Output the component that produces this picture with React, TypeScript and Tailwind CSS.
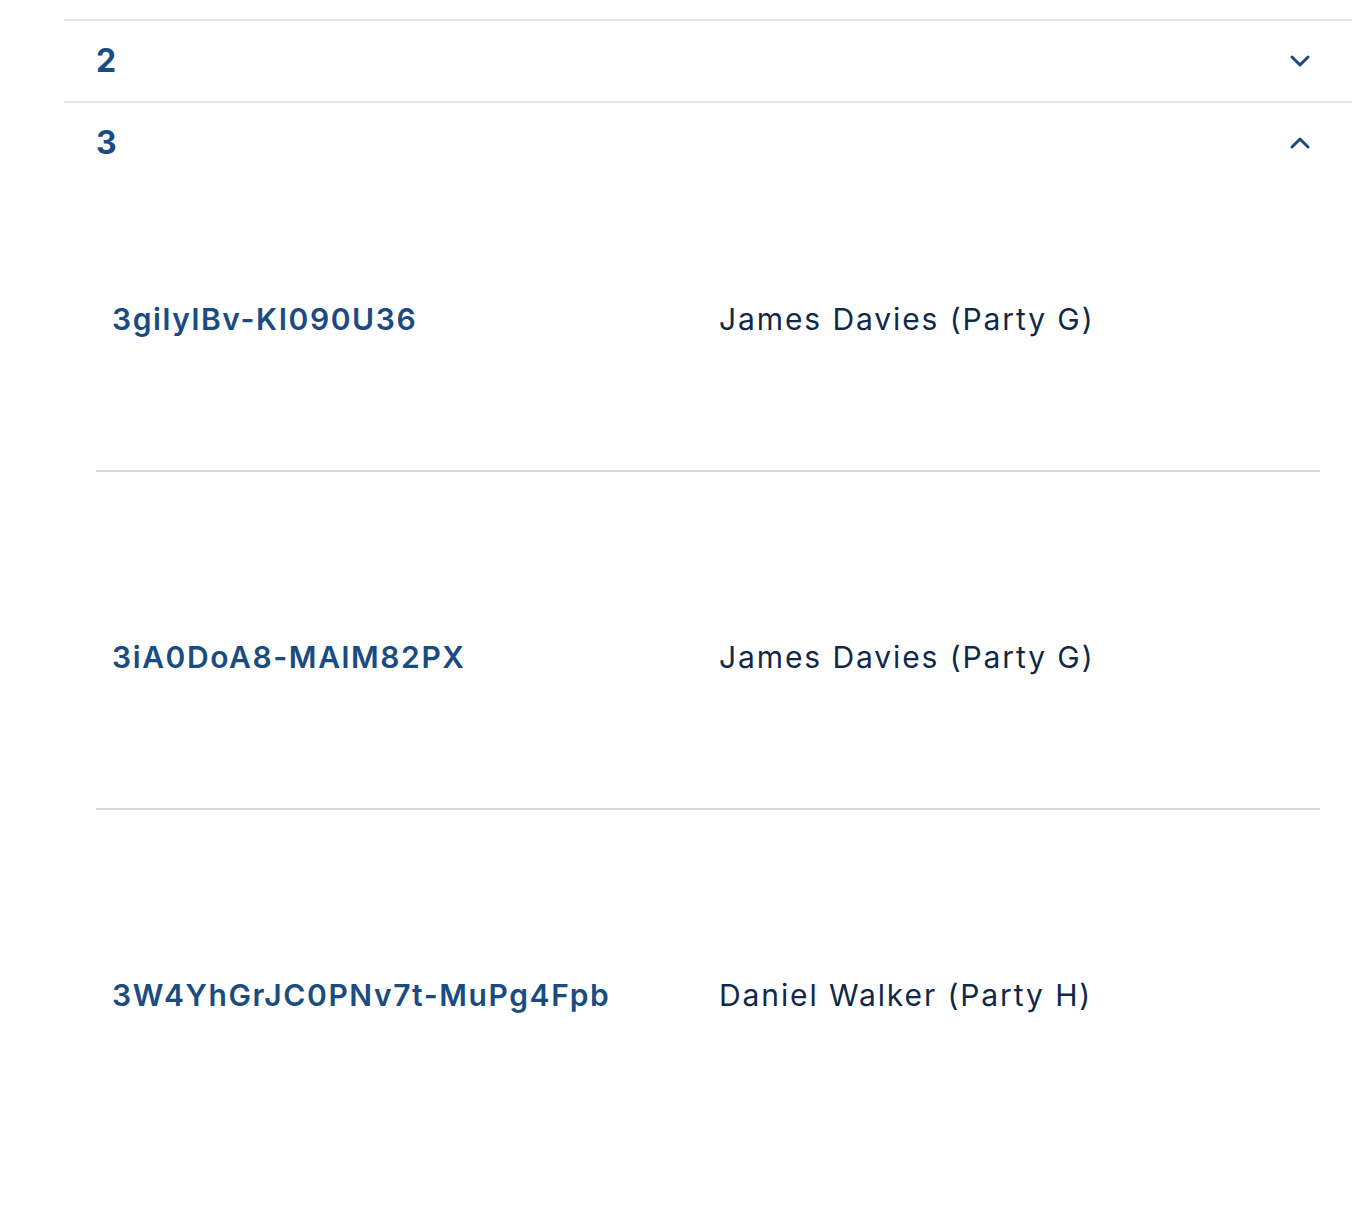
import React, { useState } from 'react';
import { ChevronDown, ChevronUp } from 'lucide-react';

type Row = { id: string; owner: string };

const groups: { label: string; rows: Row[] }[] = [
  { label: '2', rows: [] },
  {
    label: '3',
    rows: [
      { id: '3gilylBv-KI090U36', owner: 'James Davies (Party G)' },
      { id: '3iA0DoA8-MAlM82PX', owner: 'James Davies (Party G)' },
      { id: '3W4YhGrJC0PNv7t-MuPg4Fpb', owner: 'Daniel Walker (Party H)' },
    ],
  },
];

const App: React.FC = () => {
  const [open, setOpen] = useState<string | null>('3');

  return (
    <div className="min-h-screen bg-white font-['Inter',sans-serif] pt-[19px] pl-16 pr-[14px]">
      {groups.map((g) => {
        const isOpen = open === g.label;
        return (
          <div key={g.label} className="border-t-2 border-[#e3e7ef]">
            <button
              type="button"
              onClick={() => setOpen(isOpen ? null : g.label)}
              className="w-full h-[80px] flex items-center justify-between pl-8 pr-9 text-[#1a4c82]"
            >
              <span className="text-[32px] font-bold leading-none">{g.label}</span>
              {isOpen ? <ChevronUp size={32} strokeWidth={2.25} /> : <ChevronDown size={32} strokeWidth={2.25} />}
            </button>
            {isOpen && (
              <div className="px-8">
                {g.rows.map((r, i) => (
                  <div
                    key={r.id}
                    className={`grid grid-cols-[607px_1fr] items-center text-[30px] leading-[42px] ${
                      i === 0 ? 'pt-[115px]' : 'pt-[164px]'
                    } ${i < g.rows.length - 1 ? 'pb-[130px] border-b-2 border-[#dadada]' : 'pb-[130px]'}`}
                  >
                    <span className="pl-4 font-semibold tracking-[1.6px] text-[#1a4c82]">{r.id}</span>
                    <span className="pl-4 tracking-[1.9px] text-[#10294a]">{r.owner}</span>
                  </div>
                ))}
              </div>
            )}
          </div>
        );
      })}
    </div>
  );
};

export default App;
